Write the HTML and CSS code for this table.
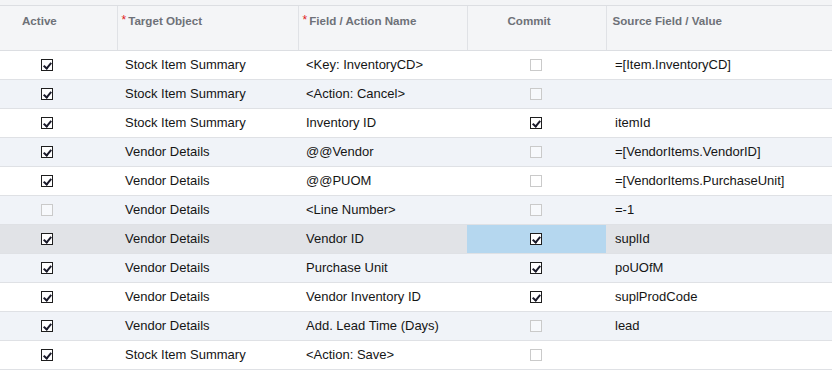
FILE: index.html
```html
<!DOCTYPE html>
<html>
<head>
<meta charset="utf-8">
<link rel="stylesheet" href="styles.css">
</head>
<body>
<div class="topstrip"></div>
<table class="grid">
  <colgroup>
    <col class="c-active"><col class="c-obj"><col class="c-field"><col class="c-commit"><col class="c-src">
  </colgroup>
  <thead>
    <tr>
      <th class="center"><span class="h-active">Active</span></th>
      <th><span class="req">*</span>Target Object</th>
      <th><span class="req">*</span>Field / Action Name</th>
      <th class="center"><span class="h-commit">Commit</span></th>
      <th class="h-src">Source Field / Value</th>
    </tr>
  </thead>
  <tbody>
    <tr>
      <td class="chk"><span class="cb on"></span></td><td>Stock Item Summary</td><td>&lt;Key: InventoryCD&gt;</td><td class="chkc"><span class="cb off"></span></td><td class="src">=[Item.InventoryCD]</td>
    </tr>
    <tr class="alt">
      <td class="chk"><span class="cb on"></span></td><td>Stock Item Summary</td><td>&lt;Action: Cancel&gt;</td><td class="chkc"><span class="cb off"></span></td><td class="src"></td>
    </tr>
    <tr>
      <td class="chk"><span class="cb on"></span></td><td>Stock Item Summary</td><td>Inventory ID</td><td class="chkc"><span class="cb on"></span></td><td class="src">itemId</td>
    </tr>
    <tr class="alt">
      <td class="chk"><span class="cb on"></span></td><td>Vendor Details</td><td>@@Vendor</td><td class="chkc"><span class="cb off"></span></td><td class="src">=[VendorItems.VendorID]</td>
    </tr>
    <tr>
      <td class="chk"><span class="cb on"></span></td><td>Vendor Details</td><td>@@PUOM</td><td class="chkc"><span class="cb off"></span></td><td class="src">=[VendorItems.PurchaseUnit]</td>
    </tr>
    <tr class="alt">
      <td class="chk"><span class="cb off"></span></td><td>Vendor Details</td><td>&lt;Line Number&gt;</td><td class="chkc"><span class="cb off"></span></td><td class="src">=-1</td>
    </tr>
    <tr class="sel">
      <td class="chk"><span class="cb on"></span></td><td>Vendor Details</td><td>Vendor ID</td><td class="chkc focus"><span class="cb on"></span></td><td class="src">suplId</td>
    </tr>
    <tr class="alt">
      <td class="chk"><span class="cb on"></span></td><td>Vendor Details</td><td>Purchase Unit</td><td class="chkc"><span class="cb on"></span></td><td class="src">poUOfM</td>
    </tr>
    <tr>
      <td class="chk"><span class="cb on"></span></td><td>Vendor Details</td><td>Vendor Inventory ID</td><td class="chkc"><span class="cb on"></span></td><td class="src">suplProdCode</td>
    </tr>
    <tr class="alt">
      <td class="chk"><span class="cb on"></span></td><td>Vendor Details</td><td>Add. Lead Time (Days)</td><td class="chkc"><span class="cb off"></span></td><td class="src">lead</td>
    </tr>
    <tr>
      <td class="chk"><span class="cb on"></span></td><td>Stock Item Summary</td><td>&lt;Action: Save&gt;</td><td class="chkc"><span class="cb off"></span></td><td class="src"></td>
    </tr>
  </tbody>
</table>
</body>
</html>
```

FILE: styles.css
```css
html, body {
  margin: 0;
  padding: 0;
  background: #ffffff;
  font-family: "Liberation Sans", Arial, sans-serif;
}
.topstrip {
  height: 5px;
  background: #f3f4f6;
  border-bottom: 1px solid #dcdee2;
}
.grid {
  width: 832px;
  border-collapse: collapse;
  table-layout: fixed;
}
.c-active { width: 117px; }
.c-obj { width: 181px; }
.c-field { width: 169px; }
.c-commit { width: 139px; }
.c-src { width: 226px; }

thead th {
  height: 44px;
  padding: 8px 0 0 10px;
  background: #f4f5f7;
  border-right: 1px solid #e0e2e6;
  border-bottom: 1px solid #dcdee2;
  color: #6e7178;
  font-size: 11.6px;
  font-weight: bold;
  text-align: left;
  vertical-align: top;
  box-sizing: border-box;
}
thead th:last-child { border-right: none; }
thead th.center { text-align: left; padding-left: 0; }
.h-active { display: inline-block; margin-left: 22px; }
.h-commit { display: inline-block; margin-left: 40px; }
thead th.h-src { padding-left: 6px; }
.req {
  color: #e02020;
  font-weight: normal;
  font-size: 12px;
  margin-right: 2px;
  position: relative;
  top: -1px;
}
thead th:nth-child(2) { padding-left: 4px; }
thead th:nth-child(3) { padding-left: 4px; }

tbody td {
  height: 27px;
  padding: 1px 0 0 8px;
  border-bottom: 1px solid #dfe1e5;
  font-size: 13px;
  color: #151515;
  white-space: nowrap;
  vertical-align: middle;
  box-sizing: content-box;
  line-height: 16px;
}
tbody td.src { padding-left: 9px; }
tbody tr.alt td { background: #f0f3f8; }
tbody tr.sel td { background: #e1e3e7; }
tbody tr.sel td.focus { background: #b5d7ef; }

td.chk { padding-left: 41px; }
td.chkc { padding-left: 63px; }

.cb {
  display: block;
  width: 12px;
  height: 12px;
  box-sizing: border-box;
  background: #ffffff;
  position: relative;
}
.cb.off { border: 1px solid #cacaca; }
.cb.on { border: 1px solid #1e1e1e; }
.cb.on::after {
  content: "";
  position: absolute;
  left: 3px;
  top: 1px;
  width: 3px;
  height: 6px;
  border-right: 2px solid #1a1a2a;
  border-bottom: 2px solid #1a1a2a;
  transform: rotate(40deg);
}
tr.alt .cb.off { background: #f7f9fc; }
```
